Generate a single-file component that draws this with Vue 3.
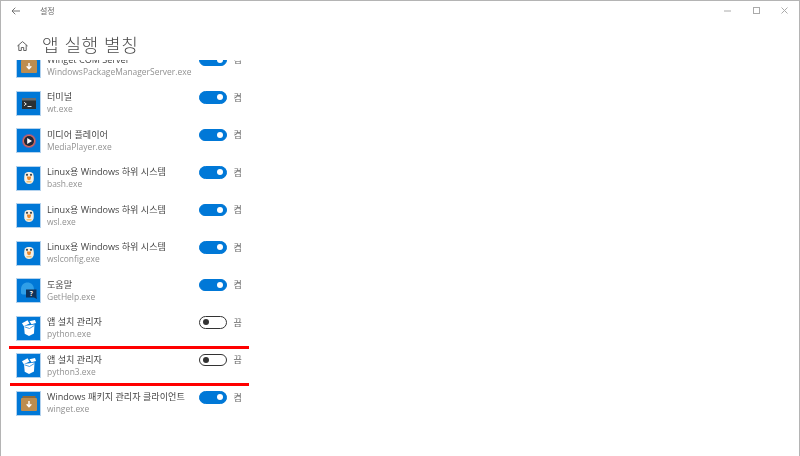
<script setup>
const rows = [
  { t: 'Winget COM Server', s: 'WindowsPackageManagerServer.exe', i: 'box', on: true },
  { t: '터미널', s: 'wt.exe', i: 'term', on: true },
  { t: '미디어 플레이어', s: 'MediaPlayer.exe', i: 'media', on: true },
  { t: 'Linux용 Windows 하위 시스템', s: 'bash.exe', i: 'tux', on: true },
  { t: 'Linux용 Windows 하위 시스템', s: 'wsl.exe', i: 'tux', on: true },
  { t: 'Linux용 Windows 하위 시스템', s: 'wslconfig.exe', i: 'tux', on: true },
  { t: '도움말', s: 'GetHelp.exe', i: 'help', on: true },
  { t: '앱 설치 관리자', s: 'python.exe', i: 'inst', on: false },
  { t: '앱 설치 관리자', s: 'python3.exe', i: 'inst', on: false },
  { t: 'Windows 패키지 관리자 클라이언트', s: 'winget.exe', i: 'box', on: true },
]
</script>

<template>
  <div class="win">
    <div class="bar">
      <svg class="back" width="9" height="8" viewBox="0 0 9 8" fill="none" stroke="#666" stroke-width=".9">
        <path d="M9 4H1M4.300.7 1 4l3.300 3.300" />
      </svg>
      <span class="bartitle">설정</span>
      <div class="ctrls">
        <svg width="7" height="2" viewBox="0 0 7 2"><path d="M0 1h7" stroke="#aaa" /></svg>
        <svg width="7" height="7" viewBox="0 0 7 7" fill="none"><rect x=".5" y=".5" width="6" height="6" stroke="#aaa" /></svg>
        <svg width="7" height="7" viewBox="0 0 7 7" fill="none"><path d="M.5.5l6 6M6.500.5l-6 6" stroke="#aaa" /></svg>
      </div>
    </div>
    <div class="head">
      <svg class="home" width="11" height="10" viewBox="0 0 11 10" fill="none" stroke="#555" stroke-width=".9">
        <path d="M.4 5 5.500.6 10.600 5M1.800 4v5.500h2.500V6.500h2.400v3h2.500V4" />
      </svg>
      <h1>앱 실행 별칭</h1>
    </div>
    <div class="clip">
      <div class="list">
        <div v-for="r in rows" :key="r.s" class="row">
          <div class="icon">
            <svg v-if="r.i === 'box'" width="16" height="15" viewBox="0 0 16 15">
              <rect x="1.500" y="0" width="13" height="3" fill="#8f6a3a" />
              <rect x="0" y="2" width="16" height="13" rx="1" fill="#bd8d4f" />
              <path d="M8 5v5.500M5.700 8.300 8 10.700l2.300-2.400" stroke="#fff" stroke-width="1.400" fill="none" />
            </svg>
            <svg v-else-if="r.i === 'term'" width="14" height="11" viewBox="0 0 14 11">
              <rect width="14" height="11" fill="#2a3034" />
              <rect width="14" height="2.500" fill="#666c70" />
              <path d="M2 4.300 4.300 6 2 7.700" stroke="#e8e8e8" fill="none" />
              <path d="M5.500 8.500h4" stroke="#e8e8e8" />
            </svg>
            <svg v-else-if="r.i === 'media'" width="14" height="14" viewBox="0 0 14 14">
              <circle cx="7" cy="7" r="7" fill="#8a5a96" />
              <circle cx="7" cy="7" r="6" fill="#d77250" />
              <circle cx="7" cy="7" r="5" fill="#20263a" />
              <path d="M5.200 4v6L10 7z" fill="#fff" />
            </svg>
            <svg v-else-if="r.i === 'tux'" width="10" height="12" viewBox="0 0 10 12">
              <path d="M1 1.500C2 .2 3.500 0 5 0s3 .2 4 1.500c.8 1.500 1 5 .6 7C9 11 7 12 5 12s-4-1-4.600-3.500C0 6.500.2 3 1 1.500z" fill="#f7efe3" />
              <circle cx="3" cy="2.800" r="1.100" fill="#39424a" />
              <circle cx="7" cy="2.800" r="1.100" fill="#39424a" />
              <path d="M2.800 4.500h4.400L6.500 7.500 5 8.300 3.500 7.500z" fill="#e9862a" />
              <path d="M2.500 9h5v1.500h-5z" fill="#f0c070" />
            </svg>
            <svg v-else-if="r.i === 'help'" width="16" height="17" viewBox="0 0 16 17">
              <path d="M0 11.500V7.500C0 3 3 .5 6.500.5S13 3 13 7.500V9H5v3.500H1.500z" fill="#2f9fe8" />
              <path d="M5 7.500h10.500v7l.5 2.500-3-1.500H5z" fill="#0e3159" />
              <text x="10.300" y="13.800" class="q">?</text>
            </svg>
            <svg v-else width="14" height="16" viewBox="0 0 14 16">
              <path d="M2 6 12.500 4.500 12 13.500 7 16l-4.300-2.300z" fill="#fff" />
              <path d="M0 3.300 5.500.3 7.500 3.500 1.800 6.200z" fill="#fff" />
              <path d="M7.500 1.300 13 0l1 3-4.500 1.300z" fill="#fff" />
              <path d="M2.500 6.800 7.500 8.500 12.300 5.500" stroke="#0078d7" stroke-width=".7" fill="none" />
            </svg>
          </div>
          <div class="names">
            <div class="t">{{ r.t }}</div>
            <div class="s">{{ r.s }}</div>
          </div>
          <div class="tog" :class="{ on: r.on }"><i></i></div>
          <span class="state">{{ r.on ? '켬' : '끔' }}</span>
        </div>
      </div>
      <div class="red r1"></div>
      <div class="red r2"></div>
    </div>
  </div>
</template>

<style scoped>
.win {
  width: 800px;
  height: 456px;
  box-sizing: border-box;
  border: 1px solid #b4b4b4;
  border-bottom: 0;
  background: #fff;
  font-family: "Open Sans", "Noto Sans CJK KR", sans-serif;
  overflow: hidden;
  display: flex;
  flex-direction: column;
}
.bar {
  height: 19px;
  flex: none;
  display: flex;
  align-items: center;
  padding-left: 10px;
}
.back { display: block; }
.bartitle {
  margin-left: 20px;
  font-size: 8px;
  color: #666;
  filter: blur(.3px);
}
.ctrls {
  margin-left: auto;
  display: flex;
  align-items: center;
  gap: 21.500px;
  padding-right: 11px;
}
.head {
  height: 40px;
  flex: none;
  display: flex;
  align-items: flex-start;
  padding: 21px 0 0 16px;
  box-sizing: border-box;
}
h1 {
  margin: -8px 0 0 14px;
  font-size: 18px;
  line-height: 24px;
  font-weight: 300;
  letter-spacing: .6px;
  color: #4a4a4a;
  filter: blur(.35px);
}
.clip {
  flex: 1;
  min-height: 0;
  overflow: hidden;
  position: relative;
}
.list {
  margin-top: -7px;
  padding-left: 15px;
}
.row {
  height: 37.500px;
  display: flex;
  align-items: flex-start;
  box-sizing: border-box;
}
.icon {
  width: 25px;
  height: 25px;
  background: #0078d7;
  border: 1px solid #b3d2ee;
  box-sizing: border-box;
  flex: none;
  display: flex;
  align-items: center;
  justify-content: center;
}
.q {
  font: bold 6.500px "Open Sans", sans-serif;
  fill: #fff;
  text-anchor: middle;
}
.names {
  width: 152px;
  margin-left: 6px;
  padding-top: 0.500px;
  flex: none;
  filter: blur(.35px);
}
.t {
  font-size: 9.100px;
  line-height: 12px;
  color: #444;
  white-space: nowrap;
}
.s {
  font-size: 8.450px;
  line-height: 12px;
  color: #919191;
  white-space: nowrap;
}
.tog {
  width: 27.500px;
  height: 12.500px;
  margin-top: 0.500px;
  border-radius: 7px;
  box-sizing: border-box;
  border: 1.200px solid #333;
  display: flex;
  align-items: center;
  padding: 0 2.500px;
  flex: none;
}
.tog i {
  width: 6px;
  height: 6px;
  border-radius: 50%;
  background: #333;
  display: block;
}
.tog.on {
  background: #0078d7;
  border-color: #0078d7;
  justify-content: flex-end;
}
.tog.on i { background: #fff; }
.state {
  margin-left: 7px;
  margin-top: 1px;
  font-size: 9px;
  line-height: 12px;
  color: #666;
  filter: blur(.35px);
}
.red {
  position: absolute;
  width: 239px;
  height: 3px;
  background: #f00;
}
.r1 { top: 286px; left: 8px; width: 240px; }
.r2 { top: 323px; left: 9px; }
</style>
